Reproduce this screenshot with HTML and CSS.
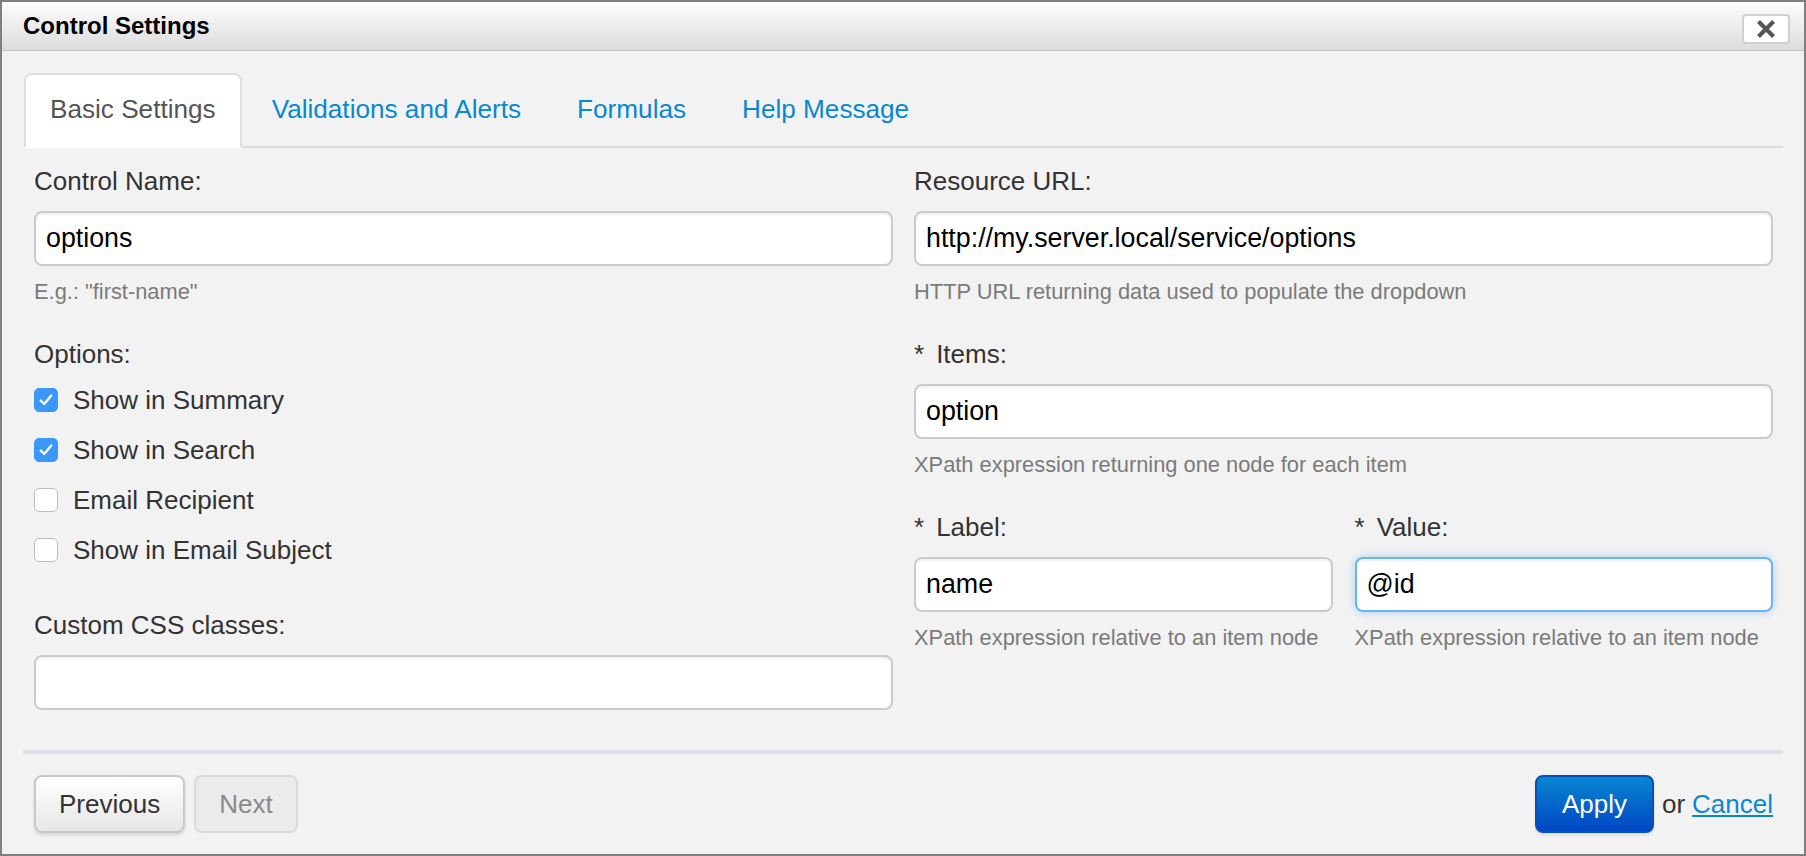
FILE: index.html
```html
<!DOCTYPE html>
<html lang="en">
<head>
<meta charset="utf-8">
<title>Control Settings</title>
<link rel="stylesheet" href="styles.css">
</head>
<body>
<div class="dialog">
  <div class="dialog-header">
    <h3 class="dialog-title">Control Settings</h3>
    <button class="close-btn" type="button" aria-label="Close">
      <svg width="20" height="18" viewBox="0 0 20 18"><path d="M2.5 1.5 L17.5 16.5 M17.5 1.5 L2.5 16.5" stroke="#555" stroke-width="4.2" stroke-linecap="butt" fill="none"/></svg>
    </button>
  </div>
  <div class="dialog-body">
    <ul class="tabs">
      <li class="tab active"><span>Basic Settings</span></li>
      <li class="tab"><a href="#">Validations and Alerts</a></li>
      <li class="tab"><a href="#">Formulas</a></li>
      <li class="tab"><a href="#">Help Message</a></li>
    </ul>
    <div class="tab-content">
      <div class="col">
        <div class="group">
          <label class="label">Control Name:</label>
          <div class="input"><span>options</span></div>
          <div class="help">E.g.: "first-name"</div>
        </div>
        <label class="label">Options:</label>
        <div class="checks">
          <div class="check-row"><span class="cb checked"><svg width="14" height="12" viewBox="0 0 14 12"><path d="M1.8 6.6 L5.2 10 L12.2 1.6" stroke="#fff" stroke-width="2.4" fill="none" stroke-linecap="round" stroke-linejoin="round"/></svg></span><span class="check-label">Show in Summary</span></div>
          <div class="check-row"><span class="cb checked"><svg width="14" height="12" viewBox="0 0 14 12"><path d="M1.8 6.6 L5.2 10 L12.2 1.6" stroke="#fff" stroke-width="2.4" fill="none" stroke-linecap="round" stroke-linejoin="round"/></svg></span><span class="check-label">Show in Search</span></div>
          <div class="check-row"><span class="cb"></span><span class="check-label">Email Recipient</span></div>
          <div class="check-row"><span class="cb"></span><span class="check-label">Show in Email Subject</span></div>
        </div>
        <div class="group css-group">
          <label class="label">Custom CSS classes:</label>
          <div class="input"><span></span></div>
        </div>
      </div>
      <div class="col">
        <div class="group">
          <label class="label">Resource URL:</label>
          <div class="input"><span>http://my.server.local/service/options</span></div>
          <div class="help">HTTP URL returning data used to populate the dropdown</div>
        </div>
        <div class="group">
          <label class="label"><span class="req">*</span>Items:</label>
          <div class="input"><span>option</span></div>
          <div class="help">XPath expression returning one node for each item</div>
        </div>
        <div class="pair">
          <div class="group">
            <label class="label"><span class="req">*</span>Label:</label>
            <div class="input"><span>name</span></div>
            <div class="help">XPath expression relative to an item node</div>
          </div>
          <div class="group">
            <label class="label"><span class="req">*</span>Value:</label>
            <div class="input focus"><span>@id</span></div>
            <div class="help">XPath expression relative to an item node</div>
          </div>
        </div>
      </div>
    </div>
  </div>
  <div class="dialog-footer">
    <div class="nav-buttons">
      <button class="btn" type="button">Previous</button>
      <button class="btn disabled" type="button">Next</button>
    </div>
    <div class="actions">
      <button class="btn primary" type="button">Apply</button>
      <span class="or">or</span>
      <a class="cancel" href="#">Cancel</a>
    </div>
  </div>
</div>
</body>
</html>
```

FILE: styles.css
```css
* { box-sizing: border-box; }

html, body {
  margin: 0;
  padding: 0;
  background: #f2f2f2;
}

body {
  font-family: "Liberation Sans", Arial, Helvetica, sans-serif;
  color: #333;
}

.dialog {
  width: 1806px;
  height: 856px;
  border: 2px solid #7f7f7f;
  background: #f2f2f2;
  display: flex;
  flex-direction: column;
}

.dialog-header {
  height: 49px;
  border-bottom: 1px solid #c4c4c4;
  background: linear-gradient(#fdfdfd, #dcdcdc);
  display: flex;
  align-items: center;
  justify-content: space-between;
  padding: 0 14px 0 21px;
}

.dialog-title {
  margin: 0;
  font-size: 24px;
  line-height: 48px;
  font-weight: bold;
  color: #000;
}

.close-btn {
  width: 48px;
  height: 30px;
  margin-top: 5px;
  padding: 0;
  border: 2px solid #d0d0d0;
  border-radius: 4px;
  background: #fff;
  display: flex;
  align-items: center;
  justify-content: center;
}

.close-btn svg { display: block; }

.dialog-body {
  padding: 22px 21px 0 22px;
}

.tabs {
  list-style: none;
  margin: 0;
  padding: 0;
  display: flex;
  border-bottom: 2px solid #dcdcdc;
}

.tab {
  margin: 0 4px -2px 0;
  padding: 14px 24px 17px;
  border: 2px solid transparent;
  border-radius: 8px 8px 0 0;
  font-size: 26.15px;
  line-height: 40px;
}

.tab a {
  color: #0a88cf;
  text-decoration: none;
}

.tab.active {
  background: #fff;
  border-color: #dedede #dedede transparent;
  color: #555;
}

.tab-content {
  padding: 13px 10px 0;
  display: grid;
  grid-template-columns: 1fr 1fr;
  column-gap: 21px;
}

.group {
  margin-bottom: 24px;
}

.label {
  display: block;
  font-size: 26px;
  line-height: 40px;
  color: #333;
}

.req {
  margin-right: 12px;
}

.input {
  height: 55px;
  margin-top: 10px;
  border: 2px solid #cbcbcb;
  border-radius: 8px;
  background: #fff;
  box-shadow: inset 0 2px 2px rgba(0, 0, 0, 0.06);
  padding: 0 11px 0 10px;
  display: flex;
  align-items: center;
  font-size: 26.8px;
  color: #000;
  white-space: nowrap;
  overflow: hidden;
}

.input.focus {
  border-color: #6db3ef;
  box-shadow: inset 0 2px 2px rgba(0, 0, 0, 0.06), 0 0 8px rgba(82, 168, 236, 0.45);
}

.help {
  margin-top: 8px;
  font-size: 21.85px;
  line-height: 36px;
  color: #7b7b7b;
  white-space: nowrap;
}

.checks {
  margin-top: 1px;
}

.check-row {
  height: 50px;
  display: flex;
  align-items: center;
}

.cb {
  width: 24px;
  height: 24px;
  border: 1.5px solid #bdbdbd;
  border-radius: 5px;
  background: #fff;
  display: flex;
  align-items: center;
  justify-content: center;
  margin-right: 15px;
  flex: none;
}

.cb.checked {
  background: #3a98fb;
  border-color: #3a98fb;
}

.cb svg { display: block; }

.check-label {
  font-size: 26px;
  line-height: 40px;
  color: #333;
}

.css-group {
  margin-top: 30px;
  margin-bottom: 0;
}

.pair {
  display: grid;
  grid-template-columns: 1fr 1fr;
  column-gap: 22px;
}

.dialog-footer {
  margin: auto 21px 0 21px;
  border-top: 4px solid #dedde9;
  padding: 21px 10px 21px 11px;
  display: flex;
  justify-content: space-between;
  align-items: center;
}

.nav-buttons {
  display: flex;
  gap: 9px;
}

.btn {
  height: 58px;
  padding: 0 23px;
  border: 2px solid #c8c8c8;
  border-radius: 8px;
  background: linear-gradient(#ffffff, #e6e6e6);
  box-shadow: 0 2px 3px rgba(0, 0, 0, 0.12);
  font-family: "Liberation Sans", Arial, Helvetica, sans-serif;
  font-size: 26px;
  color: #333;
}

.btn.disabled {
  background: #ebebeb;
  border-color: #dadada;
  box-shadow: none;
  color: #8a8a8a;
}

.btn.primary {
  padding: 0 25px;
  background: linear-gradient(#0a86d2, #0046c4);
  border-color: #0650b8;
  color: #fff;
  box-shadow: 0 2px 3px rgba(0, 0, 0, 0.1);
}

.actions {
  display: flex;
  align-items: center;
}

.or {
  margin-left: 8px;
  font-size: 26px;
  color: #333;
}

.cancel {
  margin-left: 7px;
  font-size: 26px;
  color: #0a88cf;
  text-decoration: underline;
}
```
